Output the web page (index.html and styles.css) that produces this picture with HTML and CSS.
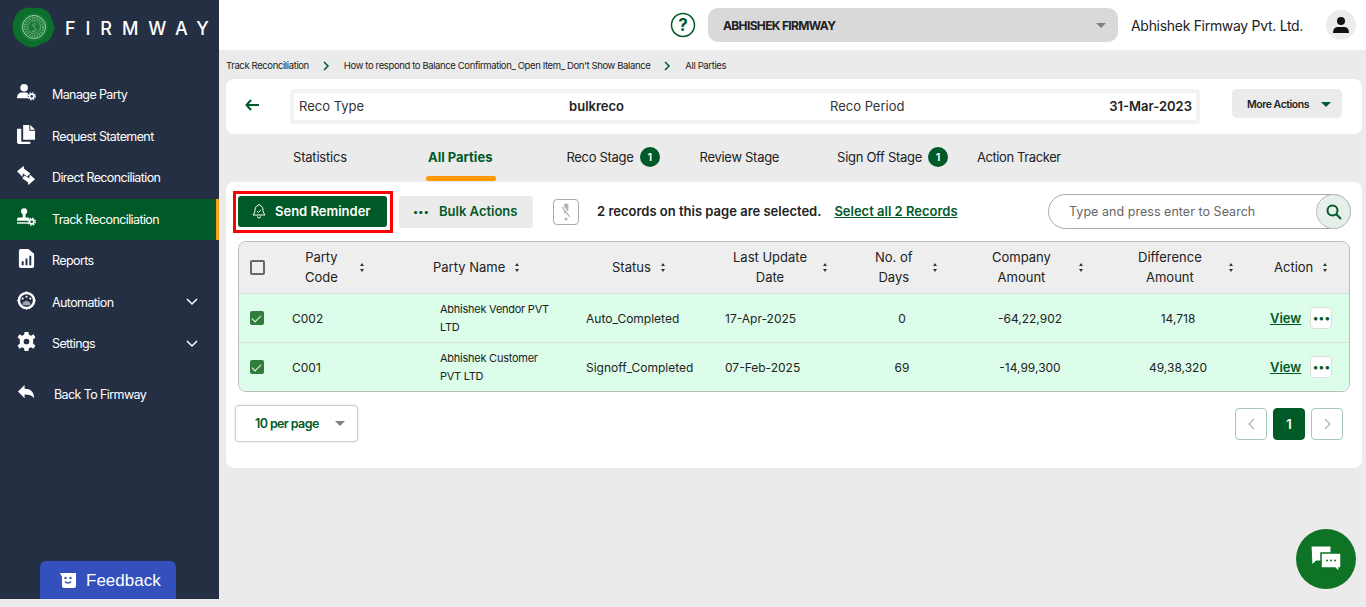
FILE: index.html
```html
<!DOCTYPE html>
<html lang="en">
<head>
  <meta charset="UTF-8">
  <meta name="viewport" content="width=device-width, initial-scale=1.0">
  <title>Firmway - All Parties</title>
  <link rel="stylesheet" href="styles.css">
</head>
<body>
  <div class="app">
    <!-- Sidebar -->
    <aside class="sidebar">
      <div class="brand">
        <svg class="brand-logo" viewBox="0 0 44 42">
          <path d="M9 3c4-2 7-3 11-2 5-1 11 0 15 3 3 3 4 5 5 9 2 4 4 8 1 12-1 3-1 5-3 7-2 4-6 3-9 5-3 2-7 4-11 3-4 0-7-3-10-5-4-2-6-5-6-9-2-4-2-9 0-13 1-4 3-8 7-10z" fill="#0c6e2b"/>
          <circle cx="22" cy="20" r="14" fill="#167a34"/>
          <circle cx="22" cy="20" r="11.500" fill="none" stroke="#a9cdb0" stroke-width="1"/>
          <circle cx="22" cy="20" r="9" fill="none" stroke="#5fa472" stroke-width="2.400" stroke-dasharray="1.500 1"/>
          <circle cx="22" cy="20" r="6.500" fill="#1a7a38" stroke="#8fb998" stroke-width=".7"/>
          <path d="M20 24c4 1 4.500-1 3.500-2.500l-2.500-2.500c-1-2 2-3 3-1.500" fill="none" stroke="#8fb998" stroke-width=".9"/>
        </svg>
        <span class="brand-name">FIRMWAY</span>
      </div>
      <nav class="nav">
        <a class="nav-item">
          <svg class="nav-icon" viewBox="0 0 20 20"><circle cx="7.500" cy="5" r="4"/><path d="M0 16c0-4 2-6 6-6h3c1 0 2 .5 2.500 1v5z"/><circle cx="15.500" cy="14" r="2.300" fill="none" stroke="#fff" stroke-width="1.800"/><circle cx="15.500" cy="14" r="3.700" fill="none" stroke="#fff" stroke-width="1.400" stroke-dasharray="1.600 1.300"/></svg>
          <span>Manage Party</span>
        </a>
        <a class="nav-item">
          <svg class="nav-icon" viewBox="0 0 20 20"><path d="M6.500 0h6.500v6h6v9.500H6.500z"/><path d="M14 0l5 5h-5z"/><path d="M0 4h4.500v13.500H14V20H2a2 2 0 0 1-2-2z"/></svg>
          <span>Request Statement</span>
        </a>
        <a class="nav-item">
          <svg class="nav-icon" viewBox="0 0 20 20"><path d="M0 5.500L7 0l.5 3 6.500 5-3 3-5-3-.2 3.500z"/><path d="M19 14l-7 6-.5-3-6-4 2.500-3 5 3 .5-4z"/></svg>
          <span>Direct Reconciliation</span>
        </a>
        <a class="nav-item active">
          <svg class="nav-icon" viewBox="0 0 20 20"><circle cx="7.500" cy="3.500" r="3.300"/><path d="M6 6h3v4h3.500v3.500H0V12c0-1.500 1-2 2.500-2H6z"/><path d="M0 15h12v1.500H0z"/><circle cx="15.500" cy="14.500" r="2.300" fill="none" stroke="#fff" stroke-width="1.800"/><circle cx="15.500" cy="14.500" r="3.700" fill="none" stroke="#fff" stroke-width="1.400" stroke-dasharray="1.600 1.300"/></svg>
          <span>Track Reconciliation</span>
        </a>
        <a class="nav-item">
          <svg class="nav-icon" viewBox="0 0 20 20"><path d="M4 0h8l6 5v13a2 2 0 0 1-2 2H4a2 2 0 0 1-2-2V2a2 2 0 0 1 2-2z"/><path d="M5 13h2v4H5zM9 10h2v7H9zM13 7h2v10h-2z" fill="#242f44"/></svg>
          <span>Reports</span>
        </a>
        <a class="nav-item">
          <svg class="nav-icon" viewBox="0 0 20 20"><circle cx="10" cy="10" r="8" fill="none" stroke="#fff" stroke-width="2.600"/><path d="M10 0l2 2H8zM10 20l-2-2h4zM0 10l2-2v4zM20 10l-2 2V8z"/><path d="M6 15v-3l4-2 4 2v3z" fill="#9aa3b0"/><circle cx="6" cy="8" r="1.100"/><circle cx="10" cy="6" r="1.100"/><circle cx="14" cy="8" r="1.100"/></svg>
          <span class="nav-label">Automation</span>
          <svg class="nav-chevron" viewBox="0 0 12 8"><path d="M1 1l5 5 5-5" fill="none" stroke="#fff" stroke-width="1.500"/></svg>
        </a>
        <a class="nav-item">
          <svg class="nav-icon" viewBox="0 0 20 20"><path d="M8 0h4l.6 3 2.200 1 2.600-1.600 2 3.400-2.400 1.900v4.600l2.400 1.900-2 3.400-2.600-1.600-2.200 1-.6 3H8l-.6-3-2.200-1-2.600 1.600-2-3.400 2.400-1.900V7.700L.6 5.800l2-3.400L5.200 4l2.200-1zM10 7a3 3 0 1 0 0 6 3 3 0 0 0 0-6z" fill-rule="evenodd"/></svg>
          <span class="nav-label">Settings</span>
          <svg class="nav-chevron" viewBox="0 0 12 8"><path d="M1 1l5 5 5-5" fill="none" stroke="#fff" stroke-width="1.500"/></svg>
        </a>
        <a class="nav-item nav-back">
          <svg class="nav-icon" viewBox="0 0 20 20"><path d="M8 2v4c6 0 10 3 10 10-2-3-5-4-10-4v4L1 9z"/></svg>
          <span>Back To Firmway</span>
        </a>
      </nav>
      <button class="feedback">
        <svg class="feedback-icon" viewBox="0 0 16 15"><path d="M0 0h16v13a2 2 0 0 1-2 2H4a2 2 0 0 1-2-2V4z" fill="#fff"/><circle cx="5.500" cy="5" r="1.200" fill="#3350bd"/><circle cx="10.500" cy="5" r="1.200" fill="#3350bd"/><path d="M5 8.500c1.500 2 4.500 2 6 0" fill="none" stroke="#3350bd" stroke-width="1.300"/></svg>
        Feedback
      </button>
    </aside>

    <div class="main">
      <header class="topbar">
        <svg class="help-icon" viewBox="0 0 26 26"><circle cx="13" cy="13" r="11.500" fill="none" stroke="#005a27" stroke-width="1.500"/><text x="13" y="19" text-anchor="middle" class="help-mark">?</text></svg>
        <div class="company-select">
          <span>ABHISHEK FIRMWAY</span>
          <i class="caret caret-gray"></i>
        </div>
        <span class="company-name">Abhishek Firmway Pvt. Ltd.</span>
        <div class="avatar">
          <svg viewBox="0 0 18 18"><circle cx="9" cy="5" r="4" fill="#111"/><path d="M1 17c0-4 2-6 5-6h6c3 0 5 2 5 6z" fill="#111"/></svg>
        </div>
      </header>

      <div class="content">
        <div class="crumbs">
          <span>Track Reconciliation</span>
          <svg class="crumb-sep" viewBox="0 0 7 10"><path d="M1 1l4 4-4 4" fill="none" stroke="#005a27" stroke-width="1.500"/></svg>
          <span>How to respond to Balance Confirmation_ Open Item_ Don't Show Balance</span>
          <svg class="crumb-sep" viewBox="0 0 7 10"><path d="M1 1l4 4-4 4" fill="none" stroke="#005a27" stroke-width="1.500"/></svg>
          <span>All Parties</span>
        </div>

        <section class="reco-card">
          <svg class="back-arrow" viewBox="0 0 14 12"><path d="M6 1L1.500 6 6 11M2 6h12" fill="none" stroke="#005a27" stroke-width="2"/></svg>
          <div class="reco-info">
            <span class="reco-label">Reco Type</span>
            <b class="reco-type">bulkreco</b>
            <span class="reco-label reco-period">Reco Period</span>
            <b class="reco-date">31-Mar-2023</b>
          </div>
          <button class="more-actions">More Actions <i class="caret caret-green"></i></button>
        </section>

        <div class="tabs">
          <a class="tab tab-stats">Statistics</a>
          <a class="tab tab-all active">All Parties</a>
          <a class="tab tab-reco">Reco Stage <b class="badge">1</b></a>
          <a class="tab tab-review">Review Stage</a>
          <a class="tab tab-sign">Sign Off Stage <b class="badge">1</b></a>
          <a class="tab tab-tracker">Action Tracker</a>
        </div>

        <section class="panel">
          <div class="toolbar">
            <div class="highlight">
              <button class="btn-send">
                <svg viewBox="0 0 14 16"><path d="M7 1.500a1 1 0 0 1 1 1c2.500.5 3 3 3 5 0 2 1.500 3.500 2 4.500H1c.5-1 2-2.500 2-4.500s.5-4.500 3-5a1 1 0 0 1 1-1zM5.500 13.500a1.500 1.500 0 0 0 3 0" fill="none" stroke="#fff" stroke-width="1"/><path d="M5 8l1.500 1.500L9 7" fill="none" stroke="#fff" stroke-width="1"/></svg>
                Send Reminder
              </button>
            </div>
            <button class="btn-bulk"><span class="dots">•••</span> Bulk Actions</button>
            <div class="pin-box">
              <svg viewBox="0 0 10 18"><path d="M2.500 3a2.500 2.500 0 0 1 5 0l-.5 7q-2 1-4 0z" fill="#b5b5b5"/><path d="M1 3l8 10" stroke="#fff" stroke-width="2.200"/><path d="M1 4l8 10" stroke="#aaa" stroke-width="1.100"/><circle cx="5" cy="16" r="1.500" fill="#b5b5b5"/></svg>
            </div>
            <span class="select-note">2 records on this page are selected.</span>
            <a class="select-all">Select all 2 Records</a>
            <div class="search">
              <span>Type and press enter to Search</span>
              <div class="search-btn">
                <svg viewBox="0 0 16 16"><circle cx="6.500" cy="6.500" r="5" fill="none" stroke="#005a27" stroke-width="2"/><path d="M10 10l5 5" stroke="#005a27" stroke-width="2"/></svg>
              </div>
            </div>
          </div>

          <div class="grid-table">
            <div class="grid-row grid-head">
              <div class="cell"><i class="check"></i></div>
              <div class="th th-code"><span>Party<br>Code</span><i class="sort"></i></div>
              <div class="th th-name"><span>Party Name</span><i class="sort"></i></div>
              <div class="th th-status"><span>Status</span><i class="sort"></i></div>
              <div class="th th-date"><span>Last Update<br>Date</span><i class="sort"></i></div>
              <div class="th th-days"><span>No. of<br>Days</span><i class="sort"></i></div>
              <div class="th th-company"><span>Company<br>Amount</span><i class="sort"></i></div>
              <div class="th th-diff"><span>Difference<br>Amount</span><i class="sort"></i></div>
              <div class="th th-action"><span>Action</span><i class="sort"></i></div>
            </div>
            <div class="grid-row">
              <div class="cell"><i class="check checked"></i></div>
              <div class="cell td-left">C002</div>
              <div class="cell td-left td-name">Abhishek Vendor PVT LTD</div>
              <div class="cell td-left">Auto_Completed</div>
              <div class="cell td-date">17-Apr-2025</div>
              <div class="cell td-days">0</div>
              <div class="cell td-company">-64,22,902</div>
              <div class="cell td-diff">14,718</div>
              <div class="cell td-action"><a class="view">View</a><button class="row-menu">•••</button></div>
            </div>
            <div class="grid-row">
              <div class="cell"><i class="check checked"></i></div>
              <div class="cell td-left">C001</div>
              <div class="cell td-left td-name">Abhishek Customer PVT LTD</div>
              <div class="cell td-left">Signoff_Completed</div>
              <div class="cell td-date">07-Feb-2025</div>
              <div class="cell td-days">69</div>
              <div class="cell td-company">-14,99,300</div>
              <div class="cell td-diff">49,38,320</div>
              <div class="cell td-action"><a class="view">View</a><button class="row-menu">•••</button></div>
            </div>
          </div>

          <div class="table-foot">
            <div class="per-page"><span>10 per page</span><i class="caret caret-gray"></i></div>
            <div class="pager">
              <button class="page-btn">
                <svg viewBox="0 0 7 12"><path d="M6 1L1 6l5 5" fill="none" stroke="#9dbfae" stroke-width="1.300"/></svg>
              </button>
              <button class="page-btn current">1</button>
              <button class="page-btn">
                <svg viewBox="0 0 7 12"><path d="M1 1l5 5-5 5" fill="none" stroke="#9dbfae" stroke-width="1.300"/></svg>
              </button>
            </div>
          </div>
        </section>
      </div>
    </div>
  </div>

  <!-- Chat bubble -->
  <button class="chat">
    <svg viewBox="0 0 32 28">
      <path d="M1 1h20v15H6l-4 4z" fill="#fff" stroke="#0e7324" stroke-width="1"/>
      <path d="M11 8h20v15h-2v4l-4-4H11z" fill="#fff" stroke="#0e7324" stroke-width="1.500"/>
      <circle cx="17" cy="15.500" r="1" fill="#0e7324"/><circle cx="21" cy="15.500" r="1" fill="#0e7324"/><circle cx="25" cy="15.500" r="1" fill="#0e7324"/>
    </svg>
  </button>
</body>
</html>
```
FILE: styles.css
```css
* {
  box-sizing: border-box;
}
body {
  margin: 0;
  background-color: #ebebeb;
  font-family: Inter, Arial, sans-serif;
  color: #222;
  overflow: hidden;
}
button {
  font-family: inherit;
  border: none;
  cursor: pointer;
}
.app {
  display: flex;
  height: 607px;
}

/* Sidebar */
.sidebar {
  position: relative;
  flex: 0 0 219px;
  height: 599px;
  background-color: #242f44;
  color: #fff;
}
.brand {
  display: flex;
  align-items: center;
  height: 56px;
  padding-left: 12px;
}
.brand-logo {
  width: 44px;
  height: 42px;
}
.brand-name {
  margin-left: 9px;
  font-size: 18px;
  font-weight: 500;
  letter-spacing: 9.900px;
  white-space: nowrap;
}
.nav {
  padding-top: 18px;
}
.nav-item {
  display: flex;
  align-items: center;
  height: 41.500px;
  padding-left: 17px;
  font-size: 12.500px;
  letter-spacing: -0.600px;
}
.nav-item.active {
  background-color: #005a27;
  border-right: 3px solid #f7a11a;
}
.nav-icon {
  flex: none;
  width: 19px;
  height: 19px;
  margin: -4px 16px 0 0;
  fill: #fff;
}
.nav-label {
  flex: 1;
}
.nav-chevron {
  width: 12px;
  height: 8px;
  margin-right: 21px;
}
.nav-back {
  margin-top: 9px;
}
.nav-back span {
  margin-left: 2px;
}
.feedback {
  position: absolute;
  left: 40px;
  bottom: 0;
  display: flex;
  align-items: center;
  gap: 10px;
  width: 136px;
  height: 38px;
  padding: 1px 0 0 20px;
  background-color: #3350bd;
  border-radius: 6px 6px 0 0;
  color: #fff;
  font-family: "Liberation Sans", Arial, sans-serif;
  font-size: 17px;
}
.feedback-icon {
  width: 16px;
  height: 15px;
}

/* Header */
.main {
  flex: 1;
  min-width: 0;
}
.topbar {
  display: flex;
  align-items: center;
  height: 50px;
  padding-left: 451px;
  background-color: #fff;
}
.help-icon {
  width: 26px;
  height: 26px;
}
.help-mark {
  font-family: Inter, Arial, sans-serif;
  font-size: 17px;
  font-weight: 700;
  fill: #005a27;
}
.company-select {
  display: flex;
  align-items: center;
  justify-content: space-between;
  width: 410px;
  height: 34px;
  margin-left: 12px;
  padding: 0 12px 0 15px;
  background-color: #d9d9d9;
  border-radius: 10px;
  font-size: 12px;
  font-weight: 700;
  letter-spacing: -0.650px;
}
.company-name {
  margin-left: 13px;
  font-size: 14px;
  letter-spacing: -0.300px;
  white-space: nowrap;
}
.avatar {
  display: flex;
  align-items: center;
  justify-content: center;
  width: 30px;
  height: 30px;
  margin-left: 23px;
  background-color: #ececec;
  border-radius: 50%;
}
.avatar svg {
  width: 18px;
  height: 18px;
}
.caret {
  display: inline-block;
  width: 0;
  height: 0;
  border-left: 5px solid transparent;
  border-right: 5px solid transparent;
}
.caret-gray {
  border-top: 5px solid #808080;
}
.caret-green {
  border-top: 5px solid #005a27;
}

/* Content */
.content {
  padding: 0 4px 0 7px;
}
.crumbs {
  display: flex;
  align-items: center;
  height: 29px;
  font-size: 9.500px;
  letter-spacing: -0.380px;
  padding-top: 2px;
  white-space: nowrap;
}
.crumb-sep {
  width: 7px;
  height: 10px;
  margin: 0 14px;
}
.reco-card {
  display: flex;
  align-items: center;
  height: 55px;
  background-color: #fff;
  border-radius: 8px;
}
.back-arrow {
  width: 14px;
  height: 12px;
  margin: -3px 0 0 19px;
}
.reco-info {
  display: flex;
  align-items: center;
  width: 910px;
  height: 35px;
  margin-left: 31px;
  padding: 0 4px 2px 5px;
  border: 4px solid #f2f2f2;
  border-radius: 4px;
  font-size: 13px;
  white-space: nowrap;
}
.reco-label {
  color: #333;
}
.reco-type {
  margin-left: 205px;
  font-weight: 600;
}
.reco-period {
  margin-left: 206px;
}
.reco-date {
  margin-left: auto;
  font-weight: 600;
}
.more-actions {
  display: flex;
  align-items: center;
  gap: 12px;
  width: 110px;
  height: 29px;
  margin: -6px 0 0 32px;
  padding: 1px 0 0 15px;
  background-color: #ebebeb;
  border-radius: 5px;
  color: #222;
  font-size: 10.500px;
  font-weight: 600;
  letter-spacing: -0.450px;
  white-space: nowrap;
}

/* Tabs */
.tabs {
  display: flex;
  align-items: center;
  height: 48px;
  padding-bottom: 2px;
  font-size: 13px;
  white-space: nowrap;
}
.tab {
  position: relative;
  display: flex;
  align-items: center;
  gap: 6px;
  letter-spacing: -0.300px;
}
.tab-stats {
  margin-left: 67px;
  letter-spacing: -0.200px;
}
.tab-all {
  margin-left: 81px;
}
.tab-reco {
  margin-left: 74px;
  letter-spacing: -0.300px;
}
.tab-review {
  margin-left: 40px;
}
.tab-sign {
  margin-left: 58px;
}
.tab-tracker {
  margin-left: 29px;
  letter-spacing: -0.400px;
}
.tab.active {
  color: #005a27;
  font-weight: 700;
  letter-spacing: 0;
}
.tab.active::after {
  content: "";
  position: absolute;
  left: -2px;
  right: -4px;
  top: 27px;
  height: 5px;
  background-color: #f90;
  border-radius: 3px;
}
.badge {
  display: flex;
  align-items: center;
  justify-content: center;
  width: 20px;
  height: 20px;
  background-color: #005a27;
  border-radius: 50%;
  color: #fff;
  font-size: 11px;
  font-weight: 600;
}

/* Panel */
.panel {
  height: 286px;
  padding: 9px 12px 0;
  background-color: #fff;
  border-radius: 8px;
}
.toolbar {
  display: flex;
  align-items: center;
  height: 42px;
  margin-left: -5px;
}
.highlight {
  width: 160px;
  height: 42px;
  padding: 2px;
  border: 3px solid #f00;
}
.btn-send {
  display: flex;
  align-items: center;
  width: 149px;
  height: 31px;
  padding: 0 0 2px 14px;
  background-color: #005a27;
  border-radius: 3px;
  color: #fff;
  font-size: 13px;
  font-weight: 600;
}
.btn-send svg {
  width: 14px;
  height: 16px;
  margin-right: 9px;
}
.btn-bulk {
  display: flex;
  align-items: center;
  width: 134px;
  height: 32px;
  margin-left: 6px;
  padding: 0 0 2px 14px;
  background-color: #ebebeb;
  border-radius: 4px;
  color: #005a27;
  font-size: 13px;
  font-weight: 600;
}
.dots {
  margin-right: 10px;
  font-size: 10px;
  letter-spacing: 0.300px;
}
.pin-box {
  display: flex;
  align-items: center;
  justify-content: center;
  width: 26px;
  height: 26px;
  margin-left: 20px;
  border: 1px solid #aaa;
  border-radius: 4px;
}
.pin-box svg {
  width: 10px;
  height: 18px;
}
.select-note {
  margin: -2px 0 0 18px;
  font-size: 13px;
  font-weight: 600;
  white-space: nowrap;
}
.select-all {
  margin: -2px 0 0 13px;
  color: #005a27;
  font-size: 13px;
  font-weight: 600;
  text-decoration: underline;
  white-space: nowrap;
}
.search {
  display: flex;
  align-items: center;
  justify-content: space-between;
  width: 303px;
  height: 35px;
  margin: -1px -1px 0 auto;
  padding-left: 20px;
  border: 1px solid #aaa;
  border-radius: 18px;
  color: #666;
  font-size: 12.500px;
  letter-spacing: 0.040px;
}
.search-btn {
  display: flex;
  align-items: center;
  justify-content: center;
  width: 35px;
  height: 35px;
  margin-right: -1px;
  background-color: #e6efe9;
  border: 1px solid #bbb;
  border-radius: 50%;
}
.search-btn svg {
  width: 16px;
  height: 16px;
}

/* Table */
.grid-table {
  margin-top: 8px;
  border: 1px solid #bbb;
  border-radius: 8px;
  overflow: hidden;
}
.grid-row {
  display: grid;
  grid-template-columns: 41px 148px 146px 140px 146px 110px 145px 135px 99px;
  height: 49px;
  border-top: 1px solid #ddd;
  background-color: #dcfde9;
  font-size: 12px;
}
.grid-head {
  height: 51px;
  border-top: none;
  background-color: #eee;
  font-size: 13px;
}
.cell {
  display: flex;
  align-items: center;
  padding-left: 11px;
}
.td-left {
  padding-left: 12px;
}
.td-date {
  padding-left: 11px;
}
.td-name {
  font-size: 11px;
  letter-spacing: -0.250px;
  line-height: 18px;
  padding-right: 19px;
}
.td-days,
.td-company,
.td-diff {
  justify-content: center;
}
.td-days {
  padding: 0 26px 0 0;
}
.td-company {
  padding: 0 25px 0 0;
}
.td-diff {
  padding: 0 9px 0 0;
}
.td-action {
  padding-left: 20px;
}
.check {
  display: block;
  width: 15px;
  height: 15px;
  border: 2px solid #666;
  border-radius: 2px;
}
.check.checked {
  position: relative;
  width: 14px;
  height: 14px;
  background-color: #2e7d3a;
  border-color: #2e7d3a;
}
.check.checked::after {
  content: "";
  position: absolute;
  left: 2px;
  top: 0;
  width: 4px;
  height: 8px;
  border: solid #fff;
  border-width: 0 1.500px 1.500px 0;
  transform: rotate(45deg);
}
.th {
  display: flex;
  align-items: center;
  padding-bottom: 2px;
  line-height: 20px;
  text-align: center;
}
.sort {
  position: relative;
  display: block;
  width: 4px;
  height: 9px;
  margin-top: 2px;
}
.sort::before,
.sort::after {
  content: "";
  position: absolute;
  left: 0;
  border-left: 2px solid transparent;
  border-right: 2px solid transparent;
}
.sort::before {
  top: 0;
  border-bottom: 3.500px solid #333;
}
.sort::after {
  bottom: 0;
  border-top: 3.500px solid #333;
}
.th-code {
  padding-left: 25px;
}
.th-code .sort {
  margin-left: 22px;
}
.th-name {
  padding-left: 5px;
}
.th-name .sort,
.th-status .sort,
.th-action .sort {
  margin-left: 10px;
}
.th-status {
  padding-left: 38px;
}
.th-date {
  padding-left: 19px;
}
.th-date .sort {
  margin-left: 16px;
}
.th-days {
  padding-left: 15px;
}
.th-days .sort {
  margin-left: 20px;
}
.th-company {
  padding-left: 22px;
}
.th-company .sort {
  margin-left: 28px;
}
.th-diff {
  padding-left: 23px;
}
.th-diff .sort {
  margin-left: 27px;
}
.th-action {
  padding-left: 24px;
}
.view {
  color: #005a27;
  font-size: 13px;
  font-weight: 600;
  text-decoration: underline;
}
.row-menu {
  width: 22px;
  height: 22px;
  margin-left: 9px;
  padding: 0;
  background-color: #fff;
  border: 1px solid #ddd;
  border-radius: 4px;
  color: #005a27;
  font-size: 11px;
  letter-spacing: -0.400px;
  line-height: 20px;
}

/* Footer of table */
.table-foot {
  display: flex;
  align-items: center;
  justify-content: space-between;
  margin: 13px 7px 0 -3px;
}
.per-page {
  display: flex;
  align-items: center;
  justify-content: space-between;
  width: 123px;
  height: 37px;
  padding: 0 12px 0 19px;
  border: 1px solid #ccc;
  border-radius: 4px;
  box-shadow: 0 0 2px rgba(0, 0, 0, 0.2);
  color: #005a27;
  font-size: 12.500px;
  font-weight: 600;
  letter-spacing: -0.600px;
}
.pager {
  display: flex;
  gap: 6px;
}
.page-btn {
  display: flex;
  align-items: center;
  justify-content: center;
  width: 32px;
  height: 32px;
  padding: 0;
  background-color: #fff;
  border: 1px solid #a9c7b7;
  border-radius: 4px;
}
.page-btn svg {
  width: 7px;
  height: 12px;
}
.page-btn.current {
  background-color: #005a27;
  border-color: #005a27;
  color: #fff;
  font-size: 13px;
  font-weight: 600;
}

/* Chat */
.chat {
  position: fixed;
  right: 10px;
  bottom: 18px;
  display: flex;
  align-items: center;
  justify-content: center;
  width: 60px;
  height: 60px;
  padding: 0;
  background-color: #0e7324;
  border-radius: 50%;
}
.chat svg {
  width: 32px;
  height: 28px;
}
```
